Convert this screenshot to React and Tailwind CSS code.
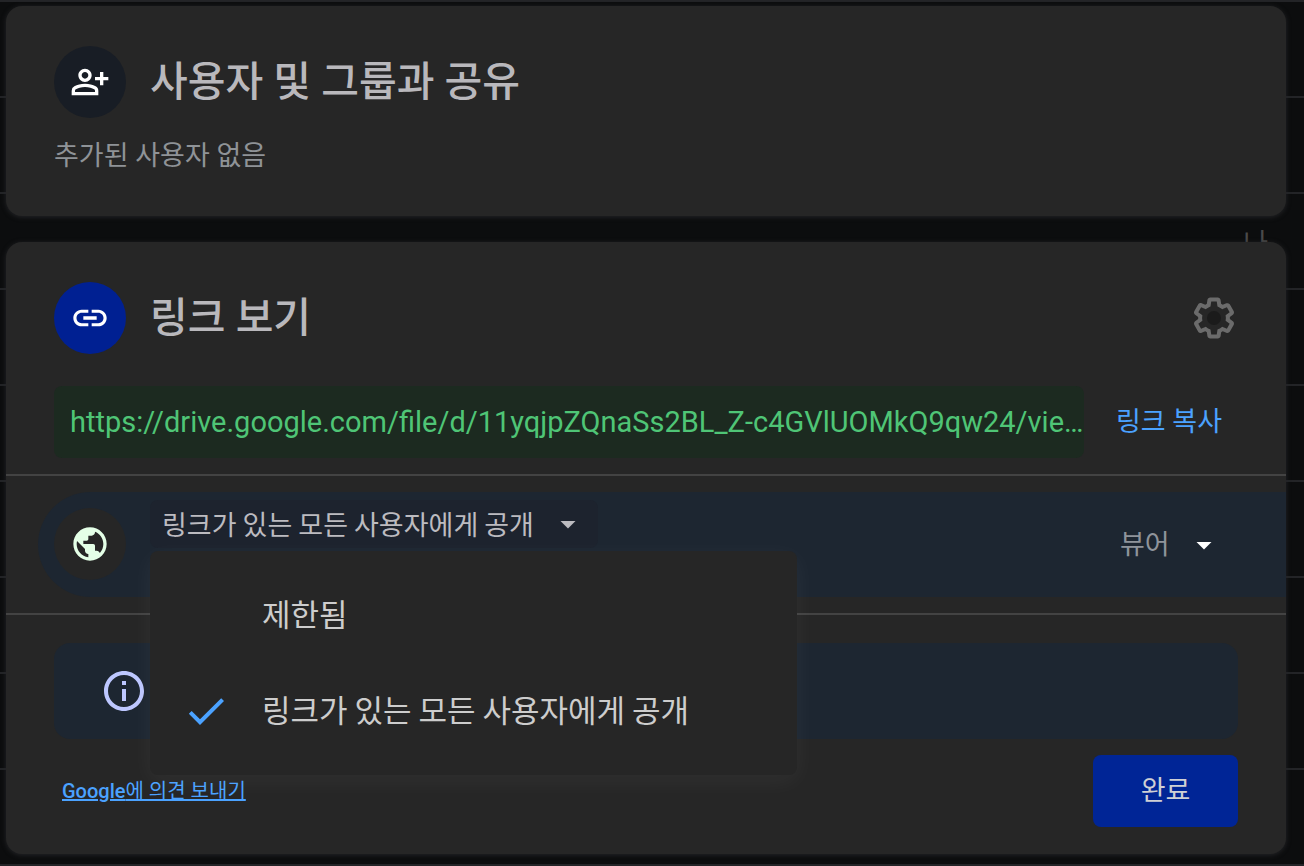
import { useState } from "react";
import {
  MdArrowDropDown,
  MdCheck,
  MdInfoOutline,
  MdLink,
  MdOutlinePersonAddAlt,
  MdPublic,
} from "react-icons/md";

const FILE_URL =
  "https://drive.google.com/file/d/11yqjpZQnaSs2BL_Z-c4GVlUOMkQ9qw24/view?usp=sharing";

const ACCESS_OPTIONS = ["제한됨", "링크가 있는 모든 사용자에게 공개"];

function GearIcon() {
  return (
    <svg viewBox="0 0 24 24" className="size-12" aria-hidden="true">
      <path
        fill="#6b6b6b"
        d="M13.85 22.25h-3.7c-.74 0-1.36-.54-1.45-1.27l-.27-1.89c-.27-.14-.53-.29-.79-.46l-1.8.72c-.7.26-1.47-.03-1.81-.65L2.2 15.53c-.35-.66-.2-1.44.36-1.88l1.53-1.19c-.01-.15-.02-.3-.02-.46 0-.15.01-.31.02-.46l-1.52-1.19c-.59-.45-.74-1.26-.37-1.88l1.85-3.19c.34-.62 1.11-.9 1.79-.63l1.81.73c.26-.17.52-.32.78-.46l.27-1.91c.09-.7.71-1.25 1.44-1.25h3.7c.74 0 1.36.54 1.45 1.27l.27 1.89c.27.14.53.29.79.46l1.8-.72c.71-.26 1.48.03 1.82.65l1.84 3.18c.36.66.2 1.44-.36 1.88l-1.52 1.19c.01.15.02.3.02.46s-.01.31-.02.46l1.52 1.19c.56.45.72 1.23.37 1.86l-1.86 3.22c-.34.62-1.11.9-1.8.63l-1.8-.72c-.26.17-.52.32-.78.46l-.27 1.91c-.1.68-.72 1.22-1.46 1.22zm-3.23-2h2.76l.37-2.55.53-.22c.44-.18.88-.44 1.34-.78l.45-.34 2.38.96 1.38-2.4-2.03-1.58.07-.56c.03-.26.06-.51.06-.78s-.03-.53-.06-.78l-.07-.56 2.03-1.58-1.39-2.4-2.39.96-.45-.35c-.42-.32-.87-.58-1.33-.77l-.52-.22-.37-2.55h-2.76l-.37 2.55-.53.21c-.44.19-.88.44-1.34.79l-.45.33-2.38-.95-1.39 2.39 2.03 1.58-.07.56a7 7 0 0 0-.06.79c0 .26.02.53.06.78l.07.56-2.03 1.58 1.38 2.4 2.39-.96.45.35c.43.33.86.58 1.33.77l.53.22.38 2.55z"
      />
      <circle cx="12" cy="12" r="3.5" fill="#1b1b1b" />
    </svg>
  );
}

export default function App() {
  const [access, setAccess] = useState(ACCESS_OPTIONS[1]);
  const [open, setOpen] = useState(true);
  const [role, setRole] = useState("viewer");

  const choose = (option) => {
    setAccess(option);
    setOpen(false);
  };

  return (
    <div className="min-h-screen bg-[#0c0d0e] bg-[linear-gradient(#232427_2px,transparent_2px)] bg-[length:100%_96px] pt-1.5 pr-[18px] pb-3 pl-1.5 font-['Roboto','Noto_Sans_CJK_KR',sans-serif] text-[27px] leading-9">
      {/* People and groups */}
      <section className="rounded-2xl bg-[#262626] px-12 pt-10 pb-[42px] shadow-[0_1px_5px_#242528]">
        <div className="flex items-center gap-6">
          <span className="flex size-[72px] shrink-0 items-center justify-center rounded-full bg-[#181d25] text-white">
            <MdOutlinePersonAddAlt className="size-10" />
          </span>
          <h1 className="text-[41px] leading-[56px] font-medium text-[#b9b8bc]">사용자 및 그룹과 공유</h1>
        </div>
        <p className="mt-5 text-[#8f9397]">추가된 사용자 없음</p>
      </section>

      {/* Link sharing */}
      <div className="relative mt-[26px]">
        <span className="absolute -top-4 right-[18px] text-[#4a4a4a]">나</span>
        <section className="relative rounded-2xl bg-[#262626] pt-10 pb-[27px] shadow-[0_1px_5px_#242528]">
          <div className="flex items-center gap-6 px-12">
            <span className="flex size-[72px] shrink-0 items-center justify-center rounded-full bg-[#002092] text-white">
              <MdLink className="size-10" />
            </span>
            <h2 className="text-[41px] leading-[56px] font-medium text-[#b9b8bc]">링크 보기</h2>
            <button type="button" aria-label="설정" className="ml-auto">
              <GearIcon />
            </button>
          </div>

          <div className="mt-8 flex items-center px-12">
            <input
              type="text"
              readOnly
              aria-label="공유 링크"
              value={FILE_URL}
              className="h-[72px] min-w-0 flex-1 text-ellipsis rounded-lg bg-[#1c2a20] pl-4 text-[29px] text-[#4fc576] outline-none"
            />
            <button type="button" className="pr-4 pl-8 whitespace-nowrap text-[#4ba2ff]">
              링크 복사
            </button>
          </div>

          <hr className="mt-4 border-t-2 border-[#434343]" />

          {/* Access level */}
          <div className="my-4 ml-8 flex h-[105px] items-start rounded-l-full bg-[#1d2631] pr-[60px] pl-4">
            <span className="mt-4 flex size-[72px] shrink-0 items-center justify-center rounded-full bg-[#262626] text-[#e4ffe7]">
              <MdPublic className="size-10" />
            </span>
            <div className="relative z-10 mt-2 ml-6 font-['Noto_Sans_CJK_KR',sans-serif]">
              <button
                type="button"
                aria-haspopup="listbox"
                aria-expanded={open}
                onClick={() => setOpen(!open)}
                className="flex h-12 items-center gap-4 rounded-lg bg-[#1d232e] px-3 whitespace-nowrap text-[#bcbbc0]"
              >
                {access}
                <MdArrowDropDown className="size-9" />
              </button>
              {open && (
                <ul
                  role="listbox"
                  aria-label="일반 액세스"
                  className="absolute top-[51px] left-0 w-[647px] rounded-lg bg-[#262626] py-4 shadow-[0_6px_24px_rgba(255,255,255,0.05)]"
                >
                  {ACCESS_OPTIONS.map((option) => (
                    <li key={option} role="option" aria-selected={option === access}>
                      <button
                        type="button"
                        onClick={() => choose(option)}
                        className="flex h-24 w-full items-center gap-8 px-8 text-left text-[31px] text-[#cdcdcd]"
                      >
                        <span className="size-12 text-[#4ba2ff]">
                          {option === access && <MdCheck className="size-12" />}
                        </span>
                        <span className="pb-1">{option}</span>
                      </button>
                    </li>
                  ))}
                </ul>
              )}
            </div>
            <div className="relative ml-auto flex h-full items-center">
              <select
                aria-label="역할"
                value={role}
                onChange={(e) => setRole(e.target.value)}
                className="appearance-none bg-transparent pr-14 text-[#8f949b] outline-none"
              >
                <option value="viewer">뷰어</option>
              </select>
              <MdArrowDropDown className="pointer-events-none absolute right-1 size-9 text-white" />
            </div>
          </div>

          <hr className="border-t-2 border-[#434343]" />

          <div className="mx-12 mt-7 flex h-24 items-center rounded-2xl bg-[#1d2631] px-[46px] text-[#bdc7ff]">
            <MdInfoOutline className="size-12" />
          </div>

          <div className="mt-4 flex items-center justify-between pr-12 pl-14">
            <a
              href="#feedback"
              className="text-xl text-[#4ba2ff] underline decoration-2"
            >
              <span className="font-medium">Google</span>에 의견 보내기
            </a>
            <button
              type="button"
              className="h-[72px] w-[145px] rounded-lg bg-[#002596] text-[#cfd0d4]"
            >
              완료
            </button>
          </div>
        </section>
      </div>
    </div>
  );
}
